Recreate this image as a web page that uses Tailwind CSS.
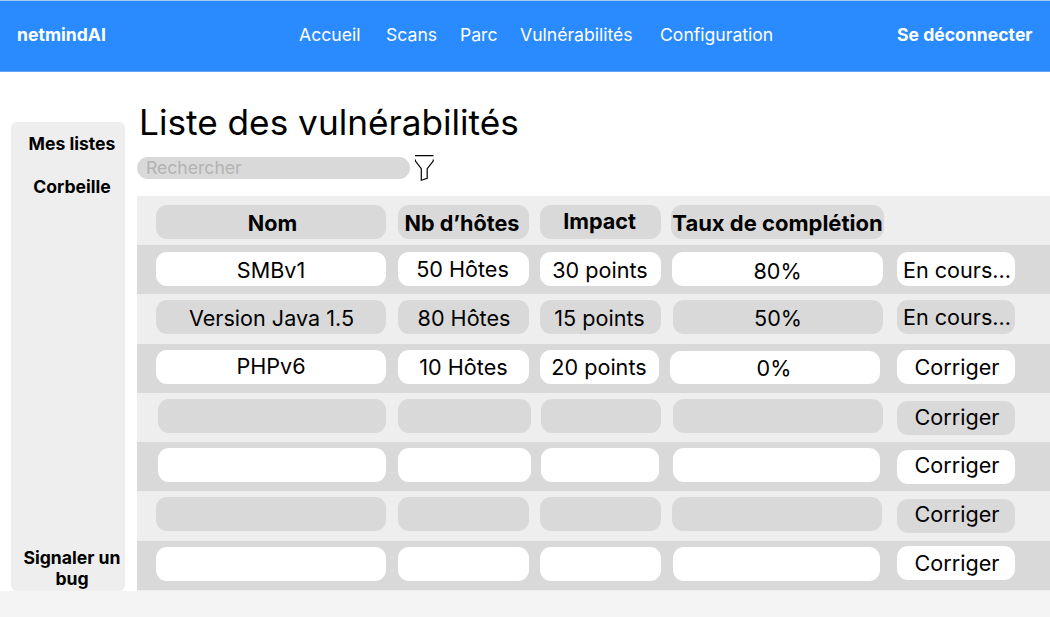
<!DOCTYPE html>
<html lang="fr">
<head>
<meta charset="utf-8">
<title>netmindAI</title>
<script src="https://cdn.jsdelivr.net/npm/@tailwindcss/browser@4"></script>
</head>
<body class="h-[617px] w-[1050px] overflow-hidden bg-[#f4f4f4] font-['Inter',sans-serif] text-black">
<div class="h-[591px] bg-white">
  <header class="h-[72px] border-t border-b border-t-[#a4c9f8] border-b-[#61a7ff] bg-[#298bff] text-[17.6px] leading-[22px] text-white">
    <div class="flex whitespace-nowrap pt-[23px] pl-[17px]">
      <div class="w-[282px] font-bold">netmindAI</div>
      <nav class="flex w-[598px]">
        <a class="w-[87px]">Accueil</a>
        <a class="w-[74px]">Scans</a>
        <a class="w-[60px]">Parc</a>
        <a class="w-[140px]">Vulnérabilités</a>
        <a>Configuration</a>
      </nav>
      <a class="font-bold">Se déconnecter</a>
    </div>
  </header>
  <div class="flex">
    <aside class="mt-[50px] ml-[11px] flex h-[469px] w-[114px] flex-col rounded-md bg-[#eee] pl-2 pt-[11px] pb-[2px] text-center text-[17.6px] leading-[22px] font-bold">
      <a>Mes listes</a>
      <a class="mt-[21px]">Corbeille</a>
      <a class="mt-auto leading-[21px]">Signaler un bug</a>
    </aside>
    <main class="ml-3 w-[913px]">
      <h1 class="mt-[28px] ml-[2px] h-[45px] text-[35.2px] leading-[44px] whitespace-nowrap">Liste des vulnérabilités</h1>
      <div class="mt-[10px] flex">
        <div class="mt-[2px] h-[22px] w-[273px] rounded-full bg-[#d9d9d9] pl-[9px] text-[17.6px] leading-[22px] text-[#b3b3b3]">Rechercher</div>
        <svg class="ml-[5px] h-7 w-[19px]" viewBox="0 0 19 28" fill="none" stroke="#000" stroke-width="1.2"><path d="M0 .6H18.5M.4 4.5V6L6.3 13.7V25.2L12.2 23.3V13.7L18.2 6V4.5"/></svg>
      </div>
      <section class="mt-[13px] flex flex-col text-center text-[21.6px] whitespace-nowrap">
        <div class="flex h-[49px] bg-[#eee] pt-[9px] pl-[19px] font-bold leading-9">
          <div class="h-[34px] w-[230px] rounded-[11px] bg-[#d9d9d9] pl-[3px]">Nom</div>
          <div class="ml-3 h-[34px] w-[131px] rounded-[11px] bg-[#d9d9d9] pr-[3px]">Nb d’hôtes</div>
          <div class="ml-[11px] h-[34px] w-[121px] rounded-[11px] bg-[#d9d9d9] pr-[2px] leading-8">Impact</div>
          <div class="ml-[10px] h-[34px] w-[213px] rounded-[11px] bg-[#d9d9d9] text-[22px]">Taux de complétion</div>
        </div>
        <div class="flex h-[49px] bg-[#d9d9d9] pt-[7px] pl-[19px] leading-9">
          <div class="h-[34px] w-[230px] rounded-[11px] bg-white">SMBv1</div>
          <div class="ml-3 h-[34px] w-[131px] rounded-[11px] bg-white pr-[2px] leading-[35px]">50 Hôtes</div>
          <div class="ml-[11px] h-[34px] w-[121px] rounded-[11px] bg-white pr-px">30 points</div>
          <div class="ml-[11px] h-[34px] w-[211px] rounded-[11px] bg-white leading-[38px]">80%</div>
          <div class="ml-[14px] h-[34px] w-[118px] rounded-[11px] bg-white pl-[2px]">En cours...</div>
        </div>
        <div class="flex h-[50px] bg-[#eee] pt-[6px] pl-[19px] leading-9">
          <div class="h-[34px] w-[230px] rounded-[11px] bg-[#d9d9d9] pl-px">Version Java 1.5</div>
          <div class="ml-3 h-[34px] w-[131px] rounded-[11px] bg-[#d9d9d9] pl-px">80 Hôtes</div>
          <div class="ml-[11px] h-[34px] w-[121px] rounded-[11px] bg-[#d9d9d9] pr-[2px]">15 points</div>
          <div class="ml-3 h-[34px] w-[210px] rounded-[11px] bg-[#d9d9d9]">50%</div>
          <div class="ml-[14px] h-[34px] w-[118px] rounded-[11px] bg-[#d9d9d9] pl-[2px] leading-[34px]">En cours...</div>
        </div>
        <div class="flex h-[49px] bg-[#d9d9d9] pt-[6px] pl-[19px] leading-[34px]">
          <div class="h-[34px] w-[230px] rounded-[11px] bg-white leading-8">PHPv6</div>
          <div class="ml-3 h-[34px] w-[131px] rounded-[11px] bg-white">10 Hôtes</div>
          <div class="ml-[11px] h-[34px] w-[119px] rounded-[11px] bg-white pr-px">20 points</div>
          <div class="mt-px ml-[11px] h-[33px] w-[210px] rounded-[11px] bg-white pr-[2px]">0%</div>
          <div class="ml-[17px] h-[34px] w-[118px] rounded-[11px] bg-white pl-[2px]">Corriger</div>
        </div>
        <div class="flex h-[49px] bg-[#eee] pt-[6px] pl-[21px] leading-[33px]">
          <div class="h-[34px] w-[228px] rounded-[11px] bg-[#d9d9d9]"></div>
          <div class="ml-3 h-[34px] w-[133px] rounded-[11px] bg-[#d9d9d9]"></div>
          <div class="ml-[10px] h-[34px] w-[120px] rounded-[11px] bg-[#d9d9d9]"></div>
          <div class="ml-3 h-[34px] w-[210px] rounded-[11px] bg-[#d9d9d9]"></div>
          <div class="mt-[2px] ml-[14px] h-[34px] w-[118px] rounded-[11px] bg-[#d9d9d9] pl-[2px]">Corriger</div>
        </div>
        <div class="flex h-[49px] bg-[#d9d9d9] pt-[6px] pl-[21px] leading-[30px]">
          <div class="h-[34px] w-[228px] rounded-[11px] bg-white"></div>
          <div class="ml-3 h-[34px] w-[133px] rounded-[11px] bg-white"></div>
          <div class="ml-[10px] h-[34px] w-[118px] rounded-[11px] bg-white"></div>
          <div class="ml-[14px] h-[34px] w-[207px] rounded-[11px] bg-white"></div>
          <div class="mt-[2px] ml-[17px] h-[34px] w-[118px] rounded-[11px] bg-white pl-[2px]">Corriger</div>
        </div>
        <div class="flex h-[50px] bg-[#eee] pt-[6px] pl-[19px] leading-[30px]">
          <div class="h-[34px] w-[230px] rounded-[11px] bg-[#d9d9d9]"></div>
          <div class="ml-3 h-[34px] w-[131px] rounded-[11px] bg-[#d9d9d9]"></div>
          <div class="ml-[11px] h-[34px] w-[121px] rounded-[11px] bg-[#d9d9d9]"></div>
          <div class="ml-[11px] h-[34px] w-[210px] rounded-[11px] bg-[#d9d9d9]"></div>
          <div class="mt-[2px] ml-[15px] h-[34px] w-[118px] rounded-[11px] bg-[#d9d9d9] pl-[2px]">Corriger</div>
        </div>
        <div class="flex h-[50px] border-b border-[#ededed] bg-[#d9d9d9] pt-[5px] pl-[19px] leading-[34px]">
          <div class="mt-px h-[34px] w-[230px] rounded-[11px] bg-white"></div>
          <div class="mt-px ml-3 h-[34px] w-[131px] rounded-[11px] bg-white"></div>
          <div class="mt-px ml-[11px] h-[34px] w-[121px] rounded-[11px] bg-white"></div>
          <div class="mt-px ml-3 h-[34px] w-[207px] rounded-[11px] bg-white"></div>
          <div class="ml-[17px] h-[34px] w-[118px] rounded-[11px] bg-white pl-[2px]">Corriger</div>
        </div>
      </section>
    </main>
  </div>
</div>
</body>
</html>
